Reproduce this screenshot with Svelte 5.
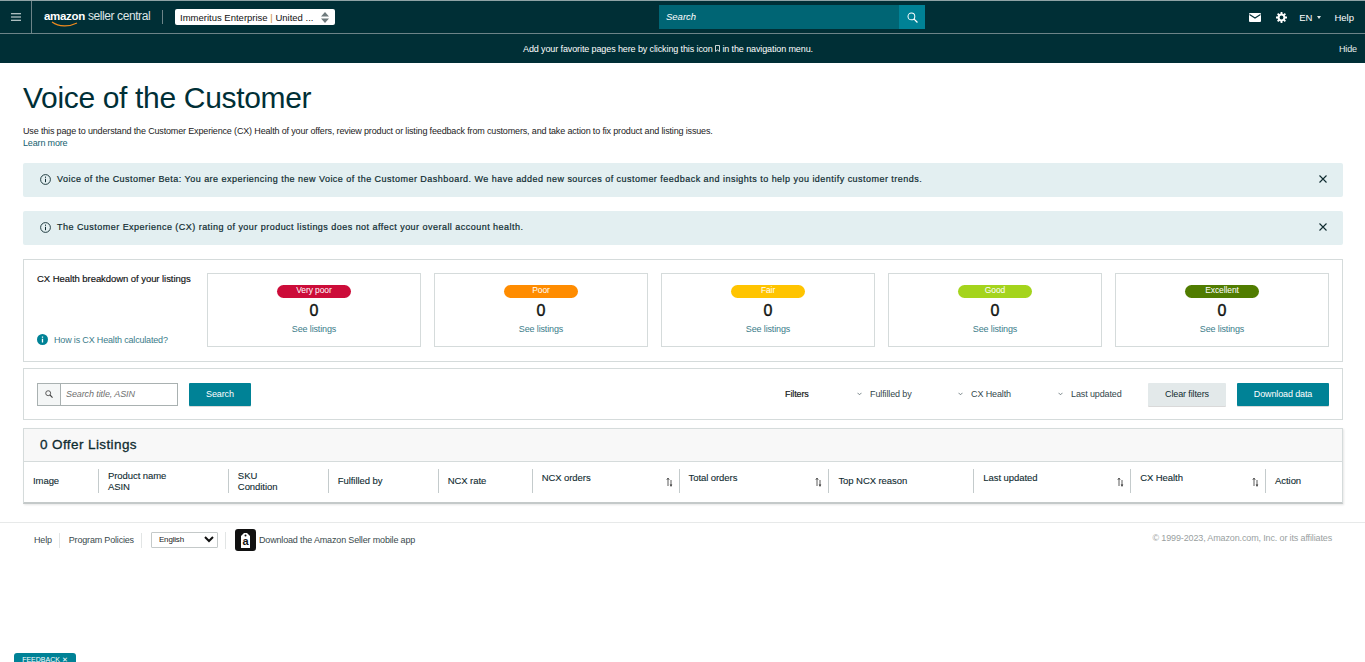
<script>
    const buckets = [
        { label: 'Very poor', color: '#cc0c39' },
        { label: 'Poor', color: '#ff8c00' },
        { label: 'Fair', color: '#ffc400' },
        { label: 'Good', color: '#a4d41c' },
        { label: 'Excellent', color: '#507c00' }
    ];

    const alerts = [
        'Voice of the Customer Beta: You are experiencing the new Voice of the Customer Dashboard. We have added new sources of customer feedback and insights to help you identify customer trends.',
        'The Customer Experience (CX) rating of your product listings does not affect your overall account health.'
    ];

    const columns = [
        { lines: ['Image'], width: 74 },
        { lines: ['Product name', 'ASIN'], width: 130 },
        { lines: ['SKU', 'Condition'], width: 100 },
        { lines: ['Fulfilled by'], width: 110 },
        { lines: ['NCX rate'], width: 94 },
        { lines: ['NCX orders'], width: 147, sort: true },
        { lines: ['Total orders'], width: 150, sort: true },
        { lines: ['Top NCX reason'], width: 145 },
        { lines: ['Last updated'], width: 157, sort: true },
        { lines: ['CX Health'], width: 135, sort: true },
        { lines: ['Action'], width: 77 }
    ];

    const filters = [
        { label: 'Fulfilled by', width: 101 },
        { label: 'CX Health', width: 100 },
        { label: 'Last updated', width: 90 }
    ];
</script>

<header class="nav">
    <div class="nav-top">
        <button class="burger" aria-label="Menu">
            <svg width="10" height="8" viewBox="0 0 10 8"><path d="M0 .7h10M0 4h10M0 7.300h10" stroke="#e6eeee" stroke-width="1.100" /></svg>
        </button>
        <div class="logo">
            <span class="logo-amazon">amazon<svg class="smile" width="28" height="6" viewBox="0 0 28 6"><path d="M1 1c7 5 17 5 25 1" fill="none" stroke="#f08a1d" stroke-width="1.100" /></svg></span>
            <span class="logo-rest">seller central</span>
        </div>
        <span class="logo-sep"></span>
        <div class="account">
            <span class="account-text">Immeritus Enterprise <i>|</i> United ...</span>
            <svg width="10" height="13" viewBox="0 0 10 13"><path d="M5 1l4 4.500H1zM5 12L1 7.500h8z" fill="#6f7a7d" /></svg>
        </div>
        <div class="nav-search">
            <span class="nav-search-input">Search</span>
            <span class="nav-search-btn">
                <svg width="11" height="11" viewBox="0 0 12 12"><circle cx="4.800" cy="4.800" r="3.700" fill="none" stroke="#fff" stroke-width="1.100" /><path d="M7.500 7.500l3.900 3.900" stroke="#fff" stroke-width="1.400" /></svg>
            </span>
        </div>
        <div class="nav-right">
            <svg class="mail" width="12" height="9" viewBox="0 0 12 9"><rect width="12" height="9" rx="1" fill="#fff" /><path d="M0.500 1.500L6 5l5.500-3.500" fill="none" stroke="#002f36" stroke-width="1.100" /></svg>
            <svg class="gear" width="11" height="11" viewBox="0 0 12 12"><circle cx="6" cy="6" r="3.200" fill="none" stroke="#fff" stroke-width="2.200" /><path d="M6 0v2.500M6 9.500V12M0 6h2.500M9.500 6H12M1.800 1.800l1.800 1.800M8.400 8.400l1.800 1.800M1.800 10.200l1.800-1.800M8.400 3.600l1.800-1.800" stroke="#fff" stroke-width="2" /></svg>
            <span class="lang">EN</span>
            <span class="lang-caret"></span>
            <span class="help">Help</span>
        </div>
    </div>
    <div class="nav-fav">
        <span class="fav-text">Add your favorite pages here by clicking this icon
            <svg width="5" height="7" viewBox="0 0 5 7"><path d="M.5.500h4v6L2.500 5 .5 6.500z" fill="none" stroke="#fff" stroke-width=".8" /></svg>
            in the navigation menu.</span>
        <span class="hide">Hide</span>
    </div>
</header>

<main class="page">
    <h1>Voice of the Customer</h1>
    <p class="intro">Use this page to understand the Customer Experience (CX) Health of your offers, review product or listing feedback from customers, and take action to fix product and listing issues.<br /><a href="#top">Learn more</a></p>

    {#each alerts as text}
        <div class="alert">
            <svg width="11" height="11" viewBox="0 0 11 11"><circle cx="5.500" cy="5.500" r="4.900" fill="none" stroke="#0f2b30" stroke-width=".9" /><path d="M5.500 4.800v3.400M5.500 2.600v1.200" stroke="#0f2b30" stroke-width="1" /></svg>
            <span class="alert-text">{text}</span>
            <svg class="close" width="8" height="8" viewBox="0 0 8 8"><path d="M.5.500l7 7M7.500.500l-7 7" stroke="#0f2b30" stroke-width="1.100" /></svg>
        </div>
    {/each}

    <section class="health">
        <div class="health-side">
            <div class="health-title">CX Health breakdown of your listings</div>
            <div class="health-how">
                <svg width="11" height="11" viewBox="0 0 11 11"><circle cx="5.500" cy="5.500" r="5.500" fill="#008296" /><path d="M5.500 4.800v3.600M5.500 2.400v1.400" stroke="#fff" stroke-width="1.300" /></svg>
                <a href="#top">How is CX Health calculated?</a>
            </div>
        </div>
        <div class="health-cards">
            {#each buckets as b}
                <div class="health-card">
                    <span class="pill" style="background: {b.color}">{b.label}</span>
                    <span class="count">0</span>
                    <a href="#top">See listings</a>
                </div>
            {/each}
        </div>
    </section>

    <section class="toolbar">
        <div class="search-box">
            <span class="search-icon">
                <svg width="8" height="8" viewBox="0 0 12 12"><circle cx="4.800" cy="4.800" r="3.700" fill="none" stroke="#444" stroke-width="1.300" /><path d="M7.500 7.500l3.800 3.800" stroke="#444" stroke-width="1.600" /></svg>
            </span>
            <span class="search-input">Search title, ASIN</span>
        </div>
        <button class="btn primary search-btn">Search</button>
        <div class="filters">
            <span class="filters-label">Filters</span>
            {#each filters as f}
                <span class="filter" style="width: {f.width}px">
                    <svg width="5" height="4" viewBox="0 0 5 4"><path d="M.5.800l2 2 2-2" fill="none" stroke="#5a6a6e" stroke-width=".8" /></svg>
                    {f.label}
                </span>
            {/each}
        </div>
        <button class="btn secondary">Clear filters</button>
        <button class="btn primary download">Download data</button>
    </section>

    <section class="listings">
        <div class="listings-head">0 Offer Listings</div>
        <div class="listings-cols">
            {#each columns as col, i}
                <div class="col" class:first={i === 0} style="width: {col.width}px">
                    <div class="col-label" class:raised={col.sort}>
                        {#each col.lines as line}
                            <div>{line}</div>
                        {/each}
                    </div>
                    {#if col.sort}
                        <svg class="sort" width="7" height="10" viewBox="0 0 7 10"><path d="M2 9V1.500M.8 2.800L2 1l1.200 1.800" fill="none" stroke="#333" stroke-width=".8" /><path d="M5 3v6.500" stroke="#333" stroke-width=".8" /><path d="M3.700 7.500h2.600L5 9.600z" fill="#333" /></svg>
                    {/if}
                </div>
            {/each}
        </div>
    </section>
</main>

<footer class="foot">
    <div class="foot-left">
        <span class="foot-link">Help</span>
        <span class="foot-link">Program Policies</span>
        <span class="foot-link lang-wrap">
            <span class="lang-select">English
                <svg width="10" height="7" viewBox="0 0 10 7"><path d="M1 1l4 4 4-4" fill="none" stroke="#111" stroke-width="2" /></svg>
            </span>
        </span>
        <svg class="app-icon" width="21" height="22" viewBox="0 0 21 22">
            <rect width="21" height="22" rx="3" fill="#111" />
            <path d="M6 7l3-3h3l3 3v12H6z" fill="#fff" />
            <circle cx="10.500" cy="6.500" r="1" fill="#111" />
            <text x="10.500" y="16" text-anchor="middle" class="app-letter">a</text>
        </svg>
        <span class="app-text">Download the Amazon Seller mobile app</span>
    </div>
    <span class="copyright">© 1999-2023, Amazon.com, Inc. or its affiliates</span>
</footer>

<div class="feedback">FEEDBACK ✕</div>

<style>
    :global(body) {
        font-family: "Liberation Sans", Arial, sans-serif;
        color: #0f1111;
        background: #fff;
        overflow: hidden;
    }

    a {
        color: #15616f;
        text-decoration: none;
    }

    /* top navigation */
    .nav {
        background: #002f36;
        color: #fff;
        height: 63px;
        border-top: 1px solid #8fa3a6;
        box-sizing: border-box;
    }

    .nav-top {
        height: 33px;
        display: flex;
        align-items: center;
        border-bottom: 1px solid #6d8488;
        box-sizing: border-box;
    }

    .burger {
        width: 32px;
        height: 32px;
        background: none;
        border: 0;
        border-right: 1px solid #6d8488;
        padding: 0;
        display: flex;
        align-items: center;
        justify-content: center;
    }

    .logo {
        margin-left: 12px;
        width: 106px;
        display: flex;
        align-items: baseline;
        gap: 3px;
        white-space: nowrap;
        position: relative;
        top: -1px;
    }

    .logo-amazon {
        font-size: 11.500px;
        font-weight: 700;
        letter-spacing: -0.300px;
        position: relative;
    }

    .smile {
        position: absolute;
        left: 7px;
        top: 11px;
    }

    .logo-rest {
        font-size: 12px;
        letter-spacing: -0.420px;
        color: #dfe6e7;
    }

    .logo-sep {
        width: 1px;
        height: 14px;
        background: #6d8488;
        margin-left: 12px;
    }

    .account {
        margin-left: 12px;
        width: 160px;
        height: 16px;
        background: #fff;
        border-radius: 2px;
        display: flex;
        align-items: center;
        justify-content: space-between;
        padding: 0 5px;
        box-sizing: border-box;
    }

    .account-text {
        color: #111;
        font-size: 9.500px;
        white-space: nowrap;
    }

    .account-text i {
        font-style: normal;
        color: #c88a3a;
    }

    .nav-search {
        margin-left: 324px;
        width: 266px;
        height: 24px;
        display: flex;
        background: #006574;
    }

    .nav-search-input {
        flex: 1;
        font-size: 9.500px;
        font-style: italic;
        line-height: 24px;
        padding-left: 7px;
    }

    .nav-search-btn {
        width: 26px;
        background: #008296;
        display: flex;
        align-items: center;
        justify-content: center;
    }

    .nav-right {
        margin-left: auto;
        display: flex;
        align-items: center;
        font-size: 9.500px;
        padding-right: 11px;
    }

    .gear {
        margin-left: 15px;
    }

    .lang {
        margin-left: 12px;
    }

    .lang-caret {
        margin-left: 5px;
        border: 2.500px solid transparent;
        border-top: 3px solid #dfe6e7;
        border-bottom: 0;
    }

    .help {
        margin-left: 13px;
    }

    .nav-fav {
        height: 29px;
        display: flex;
        align-items: center;
        font-size: 9px;
        letter-spacing: -0.110px;
        padding-left: 523px;
    }

    .fav-text {
        white-space: nowrap;
    }

    .hide {
        margin-left: auto;
        padding-right: 8px;
        color: #e6eeee;
    }

    /* page body */
    .page {
        padding: 0 22px 0 23px;
    }

    h1 {
        margin: 0;
        padding-top: 16px;
        font-size: 30px;
        font-weight: 400;
        letter-spacing: -0.330px;
        line-height: 38px;
        color: #002f36;
    }

    .intro {
        margin: 8px 0 0;
        font-size: 9px;
        letter-spacing: -0.155px;
        line-height: 12px;
        color: #222;
    }

    .alert {
        height: 34px;
        margin-top: 14px;
        background: #e3eff1;
        border-radius: 2px;
        display: flex;
        align-items: center;
        padding: 0 16px 2px 17px;
        box-sizing: border-box;
    }

    .alert-text {
        flex: 1;
        margin-left: 6px;
        font-size: 9px;
        letter-spacing: 0.470px;
        color: #0f2b30;
        -webkit-text-stroke: 0.2px #0f2b30;
    }

    .health {
        margin-top: 14px;
        height: 103px;
        border: 1px solid #d5dbdb;
        box-sizing: border-box;
        display: flex;
        padding: 13px 13px 14px;
    }

    .health-side {
        width: 170px;
        display: flex;
        flex-direction: column;
        justify-content: space-between;
    }

    .health-title {
        font-size: 9.500px;
        letter-spacing: -0.060px;
        color: #0f1111;
        -webkit-text-stroke: 0.15px #0f1111;
        line-height: 12px;
    }

    .health-how {
        display: flex;
        align-items: center;
        gap: 6px;
        font-size: 9px;
        letter-spacing: -0.170px;
        padding-bottom: 2px;
    }

    .health-how a {
        color: #3b7c8a;
    }

    .health-cards {
        flex: 1;
        display: flex;
        justify-content: space-between;
    }

    .health-card {
        width: 214px;
        height: 74px;
        border: 1px solid #d5dbdb;
        box-sizing: border-box;
        display: flex;
        flex-direction: column;
        align-items: center;
        padding-top: 11px;
        font-size: 9px;
        letter-spacing: -0.130px;
    }

    .health-card a {
        color: #3b7c8a;
        margin-top: 3px;
    }

    .pill {
        width: 74px;
        height: 13px;
        line-height: 11px;
        border-radius: 7px;
        text-align: center;
        color: #fff;
        font-size: 8.500px;
        letter-spacing: -0.100px;
    }

    .count {
        font-size: 16px;
        letter-spacing: 0;
        -webkit-text-stroke: 0.4px #0f1111;
        line-height: 20px;
        margin-top: 3px;
        color: #0f1111;
    }

    .toolbar {
        margin-top: 6px;
        height: 52px;
        border: 1px solid #d5dbdb;
        box-sizing: border-box;
        display: flex;
        align-items: center;
        padding: 0 13px;
    }

    .search-box {
        width: 141px;
        height: 23px;
        border: 1px solid #a9b1b1;
        box-sizing: border-box;
        display: flex;
    }

    .search-icon {
        width: 22px;
        background: #f4f6f6;
        border-right: 1px solid #a9b1b1;
        display: flex;
        align-items: center;
        justify-content: center;
    }

    .search-input {
        font-size: 9px;
        letter-spacing: -0.100px;
        font-style: italic;
        color: #6f6f6f;
        line-height: 21px;
        padding-left: 5px;
    }

    .btn {
        height: 23px;
        border: 0;
        border-radius: 1px;
        font-family: inherit;
        font-size: 9px;
        letter-spacing: -0.120px;
        padding: 0;
        box-shadow: 0 1px 0 rgba(0, 0, 0, 0.15);
    }

    .primary {
        background: #008296;
        color: #fff;
    }

    .secondary {
        background: #e3e9ea;
        color: #0f2b30;
        width: 78px;
    }

    .search-btn {
        width: 62px;
        margin-left: 11px;
    }

    .download {
        width: 92px;
        margin-left: 11px;
    }

    .filters {
        margin-left: auto;
        display: flex;
        align-items: center;
        font-size: 9px;
        letter-spacing: -0.120px;
        color: #33474b;
    }

    .filters-label {
        width: 72px;
        color: #0f1111;
        -webkit-text-stroke: 0.15px #0f1111;
    }

    .filter {
        display: flex;
        align-items: center;
        gap: 8px;
        white-space: nowrap;
    }

    .listings {
        margin-top: 8px;
        height: 76px;
        border: 1px solid #d5dbdb;
        border-bottom: 2px solid #c4c9c9;
        box-sizing: border-box;
        box-shadow: 1px 1px 2px rgba(0, 0, 0, 0.1);
    }

    .listings-head {
        height: 33px;
        background: #f8f8f8;
        border-bottom: 1px solid #d5dbdb;
        box-sizing: border-box;
        padding-left: 16px;
        font-size: 13.500px;
        line-height: 31px;
        letter-spacing: 0.400px;
        color: #0f2b30;
        -webkit-text-stroke: 0.3px #0f2b30;
    }

    .listings-cols {
        display: flex;
        height: 40px;
        padding-bottom: 2px;
        box-sizing: border-box;
        align-items: center;
    }

    .col {
        height: 24px;
        box-sizing: border-box;
        border-left: 1px solid #c4cbcc;
        padding-left: 9px;
        display: flex;
        align-items: center;
        justify-content: space-between;
        font-size: 9.500px;
        letter-spacing: -0.070px;
        line-height: 11.500px;
        color: #0f2b30;
        -webkit-text-stroke: 0.1px #0f2b30;
    }

    .col.first {
        border-left: 0;
    }

    .col-label.raised {
        margin-top: -6px;
    }

    .sort {
        margin-right: 6px;
        margin-top: 1px;
    }

    /* footer */
    .foot {
        margin-top: 18px;
        border-top: 1px solid #e7e9e9;
        height: 36px;
        display: flex;
        justify-content: space-between;
        padding: 0 33px 0 34px;
        font-size: 9px;
        letter-spacing: -0.180px;
        color: #3a4a4d;
    }

    .foot-left {
        display: flex;
        align-items: center;
        padding-bottom: 2px;
    }

    .foot-link {
        padding-right: 7px;
        margin-right: 9px;
        border-right: 1px solid #e2e5e5;
        line-height: 15px;
    }

    .lang-wrap {
        height: 17px;
    }

    .lang-select {
        width: 67px;
        height: 16px;
        box-sizing: border-box;
        border: 1px solid #c4c9c9;
        border-radius: 1px;
        display: flex;
        align-items: center;
        justify-content: space-between;
        font-size: 8px;
        padding: 0 3px 0 7px;
        color: #222;
    }

    .app-icon {
        margin-right: 3px;
    }

    .app-letter {
        font-size: 11px;
        font-weight: 700;
        fill: #111;
    }

    .app-text {
        letter-spacing: -0.160px;
    }

    .copyright {
        color: #9a9f9f;
        letter-spacing: -0.140px;
        line-height: 30px;
    }

    .feedback {
        position: fixed;
        left: 14px;
        bottom: -6px;
        width: 62px;
        height: 15px;
        box-sizing: border-box;
        background: #008296;
        border-radius: 3px 3px 0 0;
        color: #fff;
        font-size: 7px;
        line-height: 14px;
        text-align: center;
    }
</style>
